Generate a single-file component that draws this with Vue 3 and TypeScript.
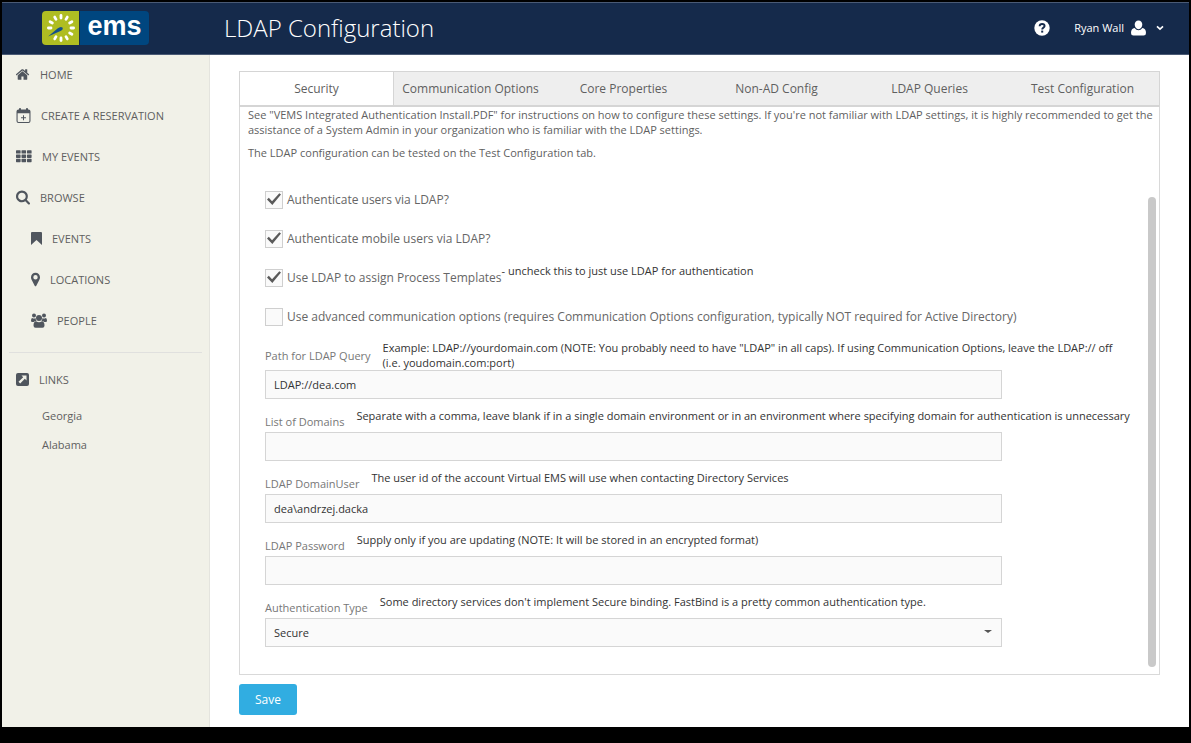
<script setup lang="ts">
import { ref } from 'vue'

interface NavItem {
  label: string
  icon: string
  width: number
  nested?: boolean
}

interface TextField {
  id: string
  label: string
  hint: string
  type: string
  value: string
}

const navItems: NavItem[] = [
  { label: 'HOME', icon: 'home', width: 14 },
  { label: 'CREATE A RESERVATION', icon: 'calendar', width: 15 },
  { label: 'MY EVENTS', icon: 'grid', width: 16 },
  { label: 'BROWSE', icon: 'search', width: 14 },
  { label: 'EVENTS', icon: 'bookmark', width: 11, nested: true },
  { label: 'LOCATIONS', icon: 'marker', width: 9, nested: true },
  { label: 'PEOPLE', icon: 'people', width: 16, nested: true },
]

const links: string[] = ['Georgia', 'Alabama']

const tabs: string[] = [
  'Security',
  'Communication Options',
  'Core Properties',
  'Non-AD Config',
  'LDAP Queries',
  'Test Configuration',
]
const activeTab = ref('Security')

const options = ref([
  { id: 'auth-users', label: 'Authenticate users via LDAP?', note: '', checked: true },
  { id: 'auth-mobile', label: 'Authenticate mobile users via LDAP?', note: '', checked: true },
  {
    id: 'assign-templates',
    label: 'Use LDAP to assign Process Templates',
    note: '- uncheck this to just use LDAP for authentication',
    checked: true,
  },
  {
    id: 'advanced',
    label:
      'Use advanced communication options (requires Communication Options configuration, typically NOT required for Active Directory)',
    note: '',
    checked: false,
  },
])

const fields = ref<TextField[]>([
  {
    id: 'path',
    label: 'Path for LDAP Query',
    hint: 'Example: LDAP://yourdomain.com (NOTE: You probably need to have "LDAP" in all caps). If using Communication Options, leave the LDAP:// off (i.e. youdomain.com:port)',
    type: 'text',
    value: 'LDAP://dea.com',
  },
  {
    id: 'domains',
    label: 'List of Domains',
    hint: 'Separate with a comma, leave blank if in a single domain environment or in an environment where specifying domain for authentication is unnecessary',
    type: 'text',
    value: '',
  },
  {
    id: 'user',
    label: 'LDAP DomainUser',
    hint: 'The user id of the account Virtual EMS will use when contacting Directory Services',
    type: 'text',
    value: 'dea\\andrzej.dacka',
  },
  {
    id: 'password',
    label: 'LDAP Password',
    hint: 'Supply only if you are updating (NOTE: It will be stored in an encrypted format)',
    type: 'password',
    value: '',
  },
])

const authTypes: string[] = ['Secure', 'FastBind', 'None']
const authType = ref('Secure')
const rays: number[] = [0, 30, 60, 90, 120, 150, 180, 210, 270, 300, 330]
</script>

<template>
  <div class="page">
    <header class="topbar">
      <a class="brand" href="#" aria-label="ems">
        <svg class="brand-mark" viewBox="0 0 37 34" aria-hidden="true">
          <path d="M4 0H37V34H4Q0 34 0 30V4Q0 0 4 0Z" fill="#afbd22" />
          <rect
            v-for="angle in rays"
            :key="angle"
            x="17.600"
            y="3"
            width="2.800"
            height="5.400"
            rx="1.400"
            fill="#fff"
            :transform="`rotate(${angle} 19 17)`"
          />
          <path d="M6 25.500L15.500 17.500Q18.500 15 20.500 16.500Q21.500 18.500 18.500 20Z" fill="#14508a" />
        </svg>
        <span class="brand-name">ems</span>
      </a>
      <h1 class="title">LDAP Configuration</h1>
      <button class="help" type="button" aria-label="Help">
        <svg viewBox="0 0 16 16" aria-hidden="true">
          <circle cx="8" cy="8" r="7.700" fill="#fff" />
          <path d="M5.600 6.200C5.700 4.700 6.700 4 8.100 4C9.600 4 10.600 4.800 10.600 6C10.600 7.700 8.200 7.500 8.200 9.400" fill="none" stroke="#152a4b" stroke-width="1.900" />
          <rect x="7.200" y="10.600" width="2" height="2" fill="#152a4b" />
        </svg>
      </button>
      <button class="account" type="button">
        <span>Ryan Wall</span>
        <svg class="avatar" viewBox="0 0 15 16" aria-hidden="true">
          <path d="M7.500 0.500C9.900 0.500 11.300 2.200 11.300 4.600C11.300 7.200 9.700 9.200 7.500 9.200C5.300 9.200 3.700 7.200 3.700 4.600C3.700 2.200 5.100 0.500 7.500 0.500ZM3.600 8Q5.200 10.200 7.500 10.200Q9.800 10.200 11.400 8Q15 8.600 15 13Q15 15.500 12.600 15.500H2.400Q0 15.500 0 13Q0 8.600 3.600 8Z" fill="#fff" />
        </svg>
        <svg class="chevron" viewBox="0 0 8 6" aria-hidden="true">
          <path d="M1 1.300L4 4.200L7 1.300" fill="none" stroke="#fff" stroke-width="1.600" />
        </svg>
      </button>
    </header>

    <div class="body">
      <nav class="sidebar" aria-label="Main">
        <a
          v-for="item in navItems"
          :key="item.label"
          href="#"
          class="nav-item"
          :class="{ nested: item.nested }"
        >
          <svg
            class="nav-icon"
            :viewBox="item.icon === 'home' ? '50 250 1692 1300' : item.icon === 'search' ? '64 128 1664 1664' : `0 0 ${item.width} 15`"
            :style="{ width: item.width + 'px' }"
            aria-hidden="true"
          >
            <path
              v-if="item.icon === 'home'"
              d="M1408 992v480q0 26-19 45t-45 19h-384v-384h-256v384h-384q-26 0-45-19t-19-45v-480q0-1 .5-3t.5-3l575-474 575 474q1 2 1 6zm223-69l-62 74q-8 9-21 11h-3q-13 0-21-7l-692-577-692 577q-12 8-24 7-13-2-21-11l-62-74q-8-10-7-23.500t11-21.500l719-599q32-26 76-26t76 26l244 204v-195q0-14 9-23t23-9h192q14 0 23 9t9 23v408l219 182q10 8 11 21.500t-7 23.500z"
            />
            <g v-else-if="item.icon === 'calendar'">
              <path
                fill-rule="evenodd"
                d="M2.500 1.500H3V0.700Q3 0 4 0Q5 0 5 0.700V1.500H10V0.700Q10 0 11 0Q12 0 12 0.700V1.500H12.500Q14.500 1.500 14.500 3.500V13Q14.500 15 12.500 15H2.500Q0.500 15 0.500 13V3.500Q0.500 1.500 2.500 1.500ZM1.600 5.300V13Q1.600 13.900 2.500 13.900H12.500Q13.400 13.900 13.400 13V5.300Z"
              />
              <path d="M7 7.200H8V9.200H10V10.200H8V12.200H7V10.200H5V9.200H7Z" />
            </g>
            <g v-else-if="item.icon === 'grid'">
              <template v-for="row in 3" :key="row">
                <rect v-for="col in 3" :key="col" :x="(col - 1) * 5.500" :y="(row - 1) * 4.300 + 1.200" width="4.600" height="3.400" rx="0.600" />
              </template>
            </g>
            <path
              v-else-if="item.icon === 'search'"
              d="M1216 832q0-185-131.500-316.500t-316.500-131.500-316.500 131.500-131.500 316.500 131.500 316.500 316.500 131.500 316.500-131.500 131.500-316.500zm512 832q0 52-38 90t-90 38q-54 0-90-38l-343-342q-179 124-399 124-143 0-273.500-55.500t-225-150-150-225-55.500-273.500 55.500-273.500 150-225 225-150 273.500-55.500 273.500 55.500 225 150 150 225 55.500 273.500q0 220-124 399l343 343q37 37 37 90z"
            />
            <path v-else-if="item.icon === 'bookmark'" d="M1 1H10Q11 1 11 2V14L5.500 9L0 14V2Q0 1 1 1Z" />
            <path
              v-else-if="item.icon === 'marker'"
              fill-rule="evenodd"
              d="M4.500 0.800C7 0.800 9 2.700 9 5.200C9 6.600 8.500 7.400 8 8.400L5.300 13.700Q4.500 14.700 3.700 13.700L1 8.400C0.500 7.400 0 6.600 0 5.200C0 2.700 2 0.800 4.500 0.800ZM4.500 3A2.200 2.200 0 1 0 4.500 7.400A2.200 2.200 0 1 0 4.500 3Z"
            />
            <g v-else>
              <circle cx="3" cy="2.600" r="2" />
              <circle cx="13" cy="2.600" r="2" />
              <circle cx="8" cy="5" r="3" />
              <path d="M1.200 5Q3 6.200 4.500 5Q4.700 7 5.600 8Q3.500 8.100 2.800 9H1.200Q0 9 0 7.800Q0 5.300 1.200 5ZM14.800 5Q13 6.200 11.500 5Q11.300 7 10.400 8Q12.500 8.100 13.200 9H14.800Q16 9 16 7.800Q16 5.300 14.800 5ZM5 8.200Q8 10.400 11 8.200Q13.500 8.500 13.500 12.500Q13.500 14.800 11.500 14.800H4.500Q2.500 14.800 2.500 12.500Q2.500 8.500 5 8.200Z" />
            </g>
          </svg>
          <span>{{ item.label }}</span>
        </a>
        <hr class="divider" />
        <div class="nav-item">
          <svg class="nav-icon" viewBox="0 0 13 15" width="13" aria-hidden="true">
            <rect y="1" width="13" height="13" rx="2" />
            <path d="M5.500 3.500H10.500V8.500L8.800 6.800L4.200 11.500L2.500 9.800L7.200 5.200Z" fill="#f1f1e8" />
          </svg>
          <span>LINKS</span>
        </div>
        <a v-for="link in links" :key="link" href="#" class="sub-link">{{ link }}</a>
      </nav>

      <main class="content">
        <div class="tabs" role="tablist">
          <button
            v-for="tab in tabs"
            :key="tab"
            type="button"
            role="tab"
            class="tab"
            :class="{ active: tab === activeTab }"
            :aria-selected="tab === activeTab"
            @click="activeTab = tab"
          >
            {{ tab }}
          </button>
        </div>

        <section class="panel" role="tabpanel">
          <p class="intro">
            See "VEMS Integrated Authentication Install.PDF" for instructions on how to configure these settings. If
            you're not familiar with LDAP settings, it is highly recommended to get the assistance of a System Admin in
            your organization who is familiar with the LDAP settings.
          </p>
          <p class="intro">The LDAP configuration can be tested on the Test Configuration tab.</p>

          <div class="scroll-area">
            <form class="form" @submit.prevent>
              <div class="options">
                <div v-for="option in options" :key="option.id" class="option">
                  <input :id="option.id" v-model="option.checked" type="checkbox" class="check" />
                  <label :for="option.id">{{ option.label }}</label>
                  <span v-if="option.note" class="note">{{ option.note }}</span>
                </div>
              </div>

              <div v-for="field in fields" :key="field.id" class="field">
                <div class="caption" :class="{ tall: field.id === 'path' }">
                  <label :for="field.id">{{ field.label }}</label>
                  <span class="hint">{{ field.hint }}</span>
                </div>
                <input :id="field.id" v-model="field.value" :type="field.type" class="control" />
              </div>

              <div class="field">
                <div class="caption">
                  <label for="auth-type">Authentication Type</label>
                  <span class="hint">Some directory services don't implement Secure binding. FastBind is a pretty common authentication type.</span>
                </div>
                <div class="select-wrap">
                  <select id="auth-type" v-model="authType" class="control">
                    <option v-for="type in authTypes" :key="type">{{ type }}</option>
                  </select>
                  <span class="caret"></span>
                </div>
              </div>
            </form>
            <div class="scrollbar"></div>
          </div>
        </section>

        <button class="save" type="button">Save</button>
      </main>
    </div>
  </div>
</template>

<style>
body {
  margin: 0;
  background: #000;
}
</style>

<style scoped>
* {
  box-sizing: border-box;
}

.page {
  display: flex;
  flex-direction: column;
  min-height: 100vh;
  border: solid #000;
  border-width: 2px 2px 16px;
  background: #fff;
  color: #5f5f5f;
  font-family: 'Open Sans', 'Noto Sans', sans-serif;
  font-size: 11px;
  line-height: 15px;
}

a {
  color: inherit;
  text-decoration: none;
}

button {
  border: 0;
  padding: 0;
  background: none;
  color: inherit;
  font: inherit;
  cursor: pointer;
}

.topbar {
  display: flex;
  align-items: center;
  height: 53px;
  padding: 0 25px 2px 40px;
  border-top: 1px solid #4a5a75;
  border-bottom: 1px solid #4a5a75;
  background: #152a4b;
  color: #fff;
}

.brand {
  display: flex;
  width: 107px;
  height: 34px;
}

.brand-mark {
  width: 37px;
  height: 34px;
}

.brand-name {
  flex: 1;
  border-left: 1px solid #152a4b;
  border-radius: 0 4px 4px 0;
  background: #00467f;
  font: bold 27px/30px 'Liberation Sans', Arial, sans-serif;
  text-align: center;
}

.title {
  flex: 1;
  margin: 0 0 0 75px;
  font-size: 24px;
  font-weight: 300;
  line-height: 32px;
}

.help {
  width: 16px;
  height: 16px;
  margin-right: 24px;
}

.help svg {
  display: block;
}

.account {
  display: flex;
  align-items: center;
}

.avatar {
  width: 15px;
  height: 16px;
  margin: 0 10px 0 7px;
}

.chevron {
  width: 8px;
  height: 6px;
}

.body {
  display: flex;
  flex: 1;
}

.sidebar {
  width: 208px;
  flex: none;
  border-right: 1px solid #e4e4de;
  background: #f1f1e8;
}

.nav-item {
  display: flex;
  align-items: center;
  gap: 10px;
  height: 41px;
  padding: 0 14px 2px;
}

.nav-item.nested {
  padding-left: 29px;
}

.nav-icon {
  flex: none;
  height: 15px;
  fill: #50565e;
}

.divider {
  height: 1px;
  margin: 10px 7px 7px;
  border: 0;
  background: #e0e0de;
}

.sub-link {
  display: block;
  padding: 7px 0 7px 40px;
}

.content {
  display: flex;
  flex: 1;
  flex-direction: column;
  align-items: stretch;
  min-width: 0;
  padding: 16px 29px 12px;
}

.tabs {
  display: flex;
  border: 1px solid #d5d5d5;
  border-bottom-width: 2px;
  background: #eee;
}

.tab {
  flex: 1;
  height: 33px;
  font-size: 12px;
  white-space: nowrap;
}

.tab.active {
  border-right: 1px solid #d5d5d5;
  background: #fff;
}

.panel {
  display: flex;
  flex: 1;
  flex-direction: column;
  border: solid #d9d9d9;
  border-width: 0 1px 1px;
}

.intro {
  margin: 0 3px 8px 8px;
}

.scroll-area {
  display: flex;
  flex: 1;
}

.form {
  flex: 1;
  min-width: 0;
  padding: 12px 0 27px 25px;
}

.options {
  margin-bottom: 4px;
}

.option {
  display: flex;
  align-items: center;
  height: 39px;
  color: #666;
}

.option label {
  font-size: 12px;
}

.check {
  display: grid;
  width: 18px;
  height: 18px;
  flex: none;
  margin: 0 4px 0 0;
  border: 1px solid #cfcfcf;
  background: #fafafa;
  appearance: none;
  place-items: center;
}

.check:checked::after {
  width: 14px;
  height: 14px;
  background: #5a5a5a;
  clip-path: polygon(0 50%, 13% 38%, 36% 62%, 88% 5%, 100% 14%, 38% 90%);
  content: '';
}

.note {
  margin-bottom: 15px;
  color: #333;
}

.field {
  margin-bottom: 9px;
}

.field:last-child {
  margin-bottom: 0;
}

.caption {
  display: flex;
  align-items: flex-start;
  gap: 12px;
  height: 24px;
}

.caption label {
  flex: none;
  padding-top: 6px;
  color: #777;
}

.caption.tall {
  height: auto;
  align-items: center;
}

.caption.tall label {
  padding-top: 0;
}

.hint {
  padding-right: 16px;
  color: #333;
}

.control {
  display: block;
  width: 100%;
  height: 29px;
  margin: 0;
  padding: 0 8px;
  border: 1px solid #d5d5d5;
  border-radius: 0;
  background: #fafafa;
  color: #333;
  font: inherit;
  appearance: none;
}

.field > .control,
.select-wrap {
  width: calc(83% + 4px);
}

.select-wrap {
  position: relative;
}

.caret {
  position: absolute;
  top: 12px;
  right: 10px;
  border: solid transparent;
  border-width: 3px 4px 0;
  border-top-color: #555;
  pointer-events: none;
}

.scrollbar {
  width: 8px;
  margin: 29px 3px 7px 0;
  border-radius: 4px;
  background: #c9c9c9;
}

.save {
  align-self: flex-start;
  width: 58px;
  height: 31px;
  margin-top: 9px;
  border-radius: 3px;
  background: #31ade1;
  color: #fff;
  font-size: 12px;
}
</style>
